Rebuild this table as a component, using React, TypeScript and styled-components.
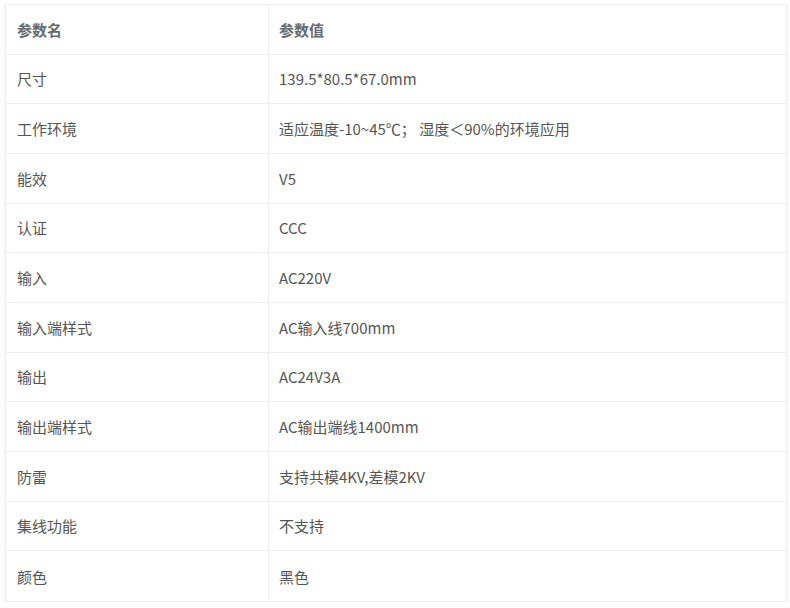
import React from "react";
import styled, { createGlobalStyle } from "styled-components";

const Global = createGlobalStyle`
  html, body { margin: 0; padding: 0; background: #ffffff; }
  body { font-family: "Noto Sans CJK SC", "Noto Sans", sans-serif; }
`;

const Page = styled.div`
  padding: 4px 5px 0 5px;
  width: 790px;
  box-sizing: border-box;
`;

const Table = styled.div`
  width: 780px;
  border: 1px solid #eceef3;
  box-shadow: 0 1px 3px rgba(0, 0, 0, 0.08);
  display: grid;
  grid-template-columns: 263px 1fr;
  grid-auto-rows: 49.67px;
`;

const Cell = styled.div<{ $head?: boolean; $last?: boolean; $right?: boolean }>`
  display: flex;
  align-items: center;
  padding-left: ${(p) => (p.$right ? "10px" : "11px")};
  border-bottom: ${(p) => (p.$last ? "none" : "1px solid #eceef3")};
  border-right: ${(p) => (p.$right ? "none" : "1px solid #eceef3")};
  font-size: 15px;
  color: ${(p) => (p.$head ? "#666a70" : "#555555")};
  font-weight: ${(p) => (p.$head ? 700 : 400)};
  white-space: nowrap;
`;

const rows: [string, string][] = [
  ["参数名", "参数值"],
  ["尺寸", "139.5*80.5*67.0mm"],
  ["工作环境", "适应温度-10~45℃； 湿度＜90%的环境应用"],
  ["能效", "V5"],
  ["认证", "CCC"],
  ["输入", "AC220V"],
  ["输入端样式", "AC输入线700mm"],
  ["输出", "AC24V3A"],
  ["输出端样式", "AC输出端线1400mm"],
  ["防雷", "支持共模4KV,差模2KV"],
  ["集线功能", "不支持"],
  ["颜色", "黑色"],
];

export default function App() {
  return (
    <>
      <Global />
      <Page>
        <Table>
          {rows.map(([k, v], i) => (
            <React.Fragment key={i}>
              <Cell $head={i === 0} $last={i === rows.length - 1}>{k}</Cell>
              <Cell $head={i === 0} $last={i === rows.length - 1} $right>{v}</Cell>
            </React.Fragment>
          ))}
        </Table>
      </Page>
    </>
  );
}
